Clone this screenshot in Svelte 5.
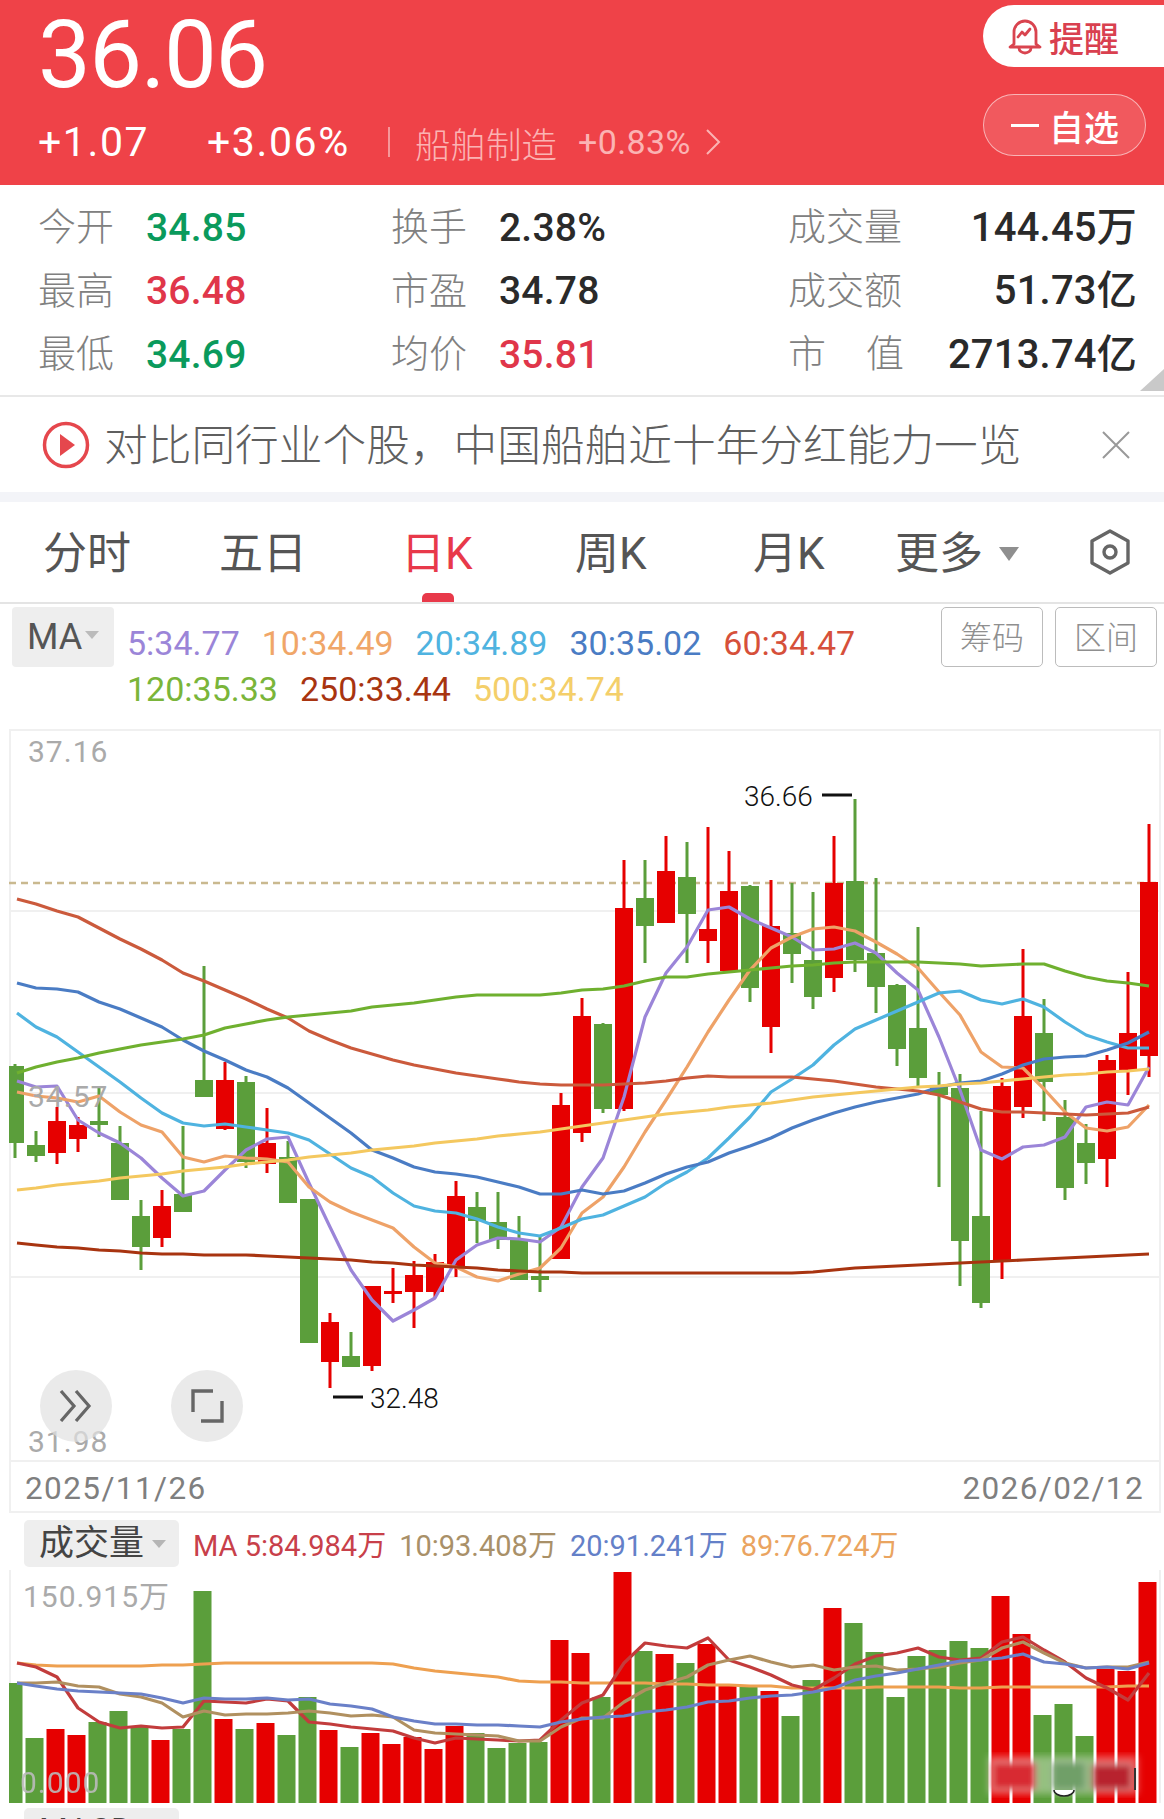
<script>
    const R = '#e60000';
    const G = '#5b9e3b';

    // [colour, high, body top, body bottom, low], page y coordinates
    const candles = [
        [G,1064,1066,1143,1158],[G,1131,1145,1156,1162],[R,1107,1121,1153,1164],[R,1117,1125,1139,1152],
        [G,1087,1121,1125,1137],[G,1126,1143,1200,1200],[G,1200,1216,1247,1270],[R,1190,1206,1238,1247],
        [G,1126,1194,1212,1212],[G,966,1080,1097,1097],[R,1062,1080,1129,1130],[G,1076,1082,1162,1168],
        [R,1108,1143,1164,1173],[G,1141,1157,1203,1203],[G,1199,1199,1343,1343],[R,1313,1322,1362,1388],
        [G,1332,1356,1367,1367],[R,1286,1286,1366,1371],[R,1268,1291,1294,1303],[R,1261,1275,1292,1328],
        [R,1254,1262,1292,1298],[R,1181,1196,1268,1277],[G,1192,1207,1221,1243],[G,1192,1222,1240,1249],
        [G,1216,1240,1280,1280],[G,1237,1276,1280,1292],[R,1093,1105,1259,1259],[R,998,1016,1133,1142],
        [G,1023,1024,1109,1113],[R,860,908,1109,1111],[G,860,898,926,963],[R,836,871,923,923],
        [G,842,877,914,963],[R,827,929,941,963],[R,851,891,971,971],[G,885,886,988,1002],
        [R,880,926,1027,1053],[G,883,933,954,983],[G,892,960,997,1009],[R,836,883,978,992],
        [G,799,881,960,972],[G,878,953,987,1013],[G,984,985,1049,1066],[G,927,1028,1078,1087],
        [G,1072,1087,1095,1187],[G,1074,1088,1241,1286],[G,1111,1216,1303,1308],[R,1078,1086,1262,1279],
        [R,949,1016,1107,1118],[G,999,1033,1082,1121],[G,1100,1117,1188,1200],[G,1124,1143,1163,1184],
        [R,1055,1060,1159,1187],[R,972,1033,1070,1095],[R,824,882,1056,1077]
    ];

    const maLines = [
        { color: '#9b85d8', ys: [1081,1087,1086,1120,1133,1143,1158,1178,1196,1191,1170,1150,1139,1137,1183,1227,1270,1300,1321,1310,1298,1260,1245,1238,1239,1242,1227,1187,1158,1097,1017,973,947,910,907,919,928,937,950,949,943,953,973,990,1037,1090,1150,1159,1147,1145,1137,1107,1102,1105,1067] },
        { color: '#eea268', ys: [1092,1096,1098,1102,1096,1112,1125,1132,1157,1162,1156,1158,1159,1162,1187,1202,1212,1220,1228,1247,1263,1267,1277,1281,1274,1268,1248,1213,1197,1167,1132,1100,1067,1032,1000,970,948,937,929,927,931,942,954,968,992,1015,1052,1067,1068,1089,1112,1128,1131,1127,1105] },
        { color: '#4fb3e0', ys: [1013,1027,1037,1052,1067,1082,1098,1113,1123,1126,1124,1127,1130,1133,1140,1154,1168,1177,1193,1206,1211,1213,1219,1227,1233,1236,1228,1219,1215,1206,1197,1183,1172,1158,1138,1117,1092,1079,1065,1045,1029,1020,1011,1002,993,991,1000,1004,999,1007,1022,1035,1042,1048,1048] },
        { color: '#4a7cc4', ys: [983,988,989,992,1002,1009,1018,1027,1040,1051,1060,1070,1077,1088,1103,1118,1133,1150,1158,1167,1172,1174,1177,1182,1187,1194,1194,1190,1194,1191,1183,1174,1167,1162,1153,1146,1138,1128,1120,1113,1107,1102,1098,1094,1087,1083,1081,1074,1065,1059,1057,1056,1050,1043,1032] },
        { color: '#cb5a3c', ys: [899,904,911,917,928,939,949,960,973,981,990,999,1009,1018,1031,1040,1048,1054,1060,1065,1069,1073,1076,1079,1082,1084,1085,1085,1085,1084,1083,1081,1078,1076,1077,1077,1077,1077,1079,1081,1084,1087,1089,1091,1095,1102,1109,1112,1112,1113,1114,1115,1114,1113,1107] },
        { color: '#6fb02f', ys: [1073,1067,1062,1058,1053,1049,1045,1042,1039,1035,1028,1024,1020,1017,1015,1013,1011,1007,1005,1003,1000,997,995,995,995,995,993,990,989,986,981,977,977,974,972,970,968,966,965,963,962,962,962,962,963,964,966,965,964,964,971,977,981,983,986] },
        { color: '#a83410', ys: [1243,1245,1247,1248,1250,1251,1253,1254,1254,1255,1255,1255,1256,1257,1258,1259,1260,1262,1263,1265,1266,1267,1268,1270,1271,1272,1272,1273,1273,1273,1273,1273,1273,1273,1273,1273,1273,1273,1272,1270,1268,1267,1266,1265,1264,1263,1262,1261,1260,1259,1258,1257,1256,1255,1254] },
        { color: '#f4c85f', ys: [1190,1188,1185,1183,1181,1178,1176,1174,1171,1169,1167,1164,1162,1160,1157,1155,1153,1150,1148,1146,1143,1141,1139,1136,1134,1132,1129,1126,1123,1120,1117,1114,1112,1110,1107,1105,1103,1100,1097,1095,1093,1091,1089,1087,1086,1084,1083,1081,1079,1077,1075,1074,1072,1071,1069] }
    ];

    const volumes = [
        [G,1683],[G,1738],[R,1729],[R,1735],[G,1722],[G,1711],[G,1727],[R,1740],[G,1729],[G,1591],[R,1719],
        [G,1729],[R,1723],[G,1735],[G,1697],[R,1730],[G,1747],[R,1733],[R,1744],[R,1737],[R,1749],[R,1726],
        [G,1733],[G,1748],[G,1743],[G,1742],[R,1640],[R,1653],[G,1697],[R,1572],[G,1651],[R,1654],[G,1663],
        [R,1644],[R,1686],[G,1687],[R,1691],[G,1716],[G,1680],[R,1608],[G,1623],[G,1652],[G,1697],[G,1656],
        [G,1650],[G,1641],[G,1648],[R,1596],[R,1634],[G,1715],[G,1704],[G,1736],[R,1669],[R,1671],[R,1582]
    ];

    const volLines = [
        { color: '#eea050', ys: [1663,1665,1666,1666,1666,1666,1666,1665,1665,1664,1663,1663,1663,1663,1663,1663,1663,1663,1664,1668,1671,1673,1675,1677,1681,1682,1682,1683,1683,1683,1683,1684,1684,1685,1685,1686,1686,1688,1688,1688,1688,1687,1687,1687,1687,1688,1688,1687,1687,1687,1687,1687,1687,1686,1686] },
        { color: '#c23c3c', ys: [1663,1667,1677,1708,1722,1728,1726,1728,1727,1701,1702,1703,1699,1701,1722,1724,1727,1729,1731,1738,1743,1738,1739,1740,1741,1740,1720,1703,1695,1663,1643,1646,1648,1638,1660,1667,1675,1685,1690,1678,1664,1656,1653,1648,1657,1660,1658,1642,1637,1650,1662,1678,1688,1700,1673] },
        { color: '#b09060', ys: [1683,1683,1682,1686,1687,1694,1697,1703,1717,1711,1715,1714,1714,1713,1711,1713,1716,1715,1717,1730,1733,1734,1735,1736,1741,1741,1727,1718,1718,1702,1690,1683,1677,1665,1660,1656,1662,1667,1665,1670,1667,1666,1670,1669,1667,1663,1660,1648,1642,1653,1663,1668,1667,1667,1662] },
        { color: '#6a80c8', ys: [1683,1686,1689,1691,1692,1693,1694,1698,1703,1698,1699,1699,1698,1700,1699,1704,1706,1709,1717,1721,1724,1724,1725,1725,1726,1727,1722,1719,1717,1716,1712,1710,1707,1702,1701,1698,1696,1695,1692,1688,1680,1676,1673,1669,1665,1661,1660,1658,1654,1662,1664,1668,1667,1669,1663] }
    ];

    const cx = (i) => 15 + 21 * i;
    const linePoints = (ys) => ys.map((y, i) => `${i === 0 ? 17 : cx(i)},${y}`).join(' ');

    const stats = [
        { label: '今开', value: '34.85', tone: 'down' },
        { label: '换手', value: '2.38%', tone: '' },
        { label: '成交量', value: '144.45万', tone: '' },
        { label: '最高', value: '36.48', tone: 'up' },
        { label: '市盈', value: '34.78', tone: '' },
        { label: '成交额', value: '51.73亿', tone: '' },
        { label: '最低', value: '34.69', tone: 'down' },
        { label: '均价', value: '35.81', tone: 'up' },
        { label: '市值', value: '2713.74亿', tone: '', spread: true }
    ];

    const tabs = ['分时', '五日', '日K', '周K', '月K'];

    const legend = [
        { color: '#9b85d8', text: '5:34.77' },
        { color: '#f0a668', text: '10:34.49' },
        { color: '#4fb3e0', text: '20:34.89' },
        { color: '#4a7cc4', text: '30:35.02' },
        { color: '#d6503a', text: '60:34.47' },
        { color: '#7ab53a', text: '120:35.33' },
        { color: '#a83410', text: '250:33.44' },
        { color: '#f4cf6a', text: '500:34.74' }
    ];

    const volLegend = [
        { color: '#c8404a', text: 'MA 5:84.984万' },
        { color: '#a99068', text: '10:93.408万' },
        { color: '#6480c8', text: '20:91.241万' },
        { color: '#eaa460', text: '89:76.724万' }
    ];
</script>

<div class="page">
    <header class="quote">
        <div class="quote-left">
            <div class="price">36.06</div>
            <div class="change">
                <span class="chg-a">+1.07</span>
                <span class="chg-b">+3.06%</span>
                <span class="sep"></span>
                <span class="sector">船舶制造</span>
                <span class="sector-pct">+0.83%</span>
                <svg class="chev" width="16" height="28" viewBox="0 0 16 28" fill="none" stroke="currentColor" stroke-width="2"><path d="M2 2l12 12L2 26" /></svg>
            </div>
        </div>
        <div class="quote-right">
            <button class="btn-alert">
                <svg width="36" height="38" viewBox="0 0 36 38" fill="none" stroke="#d9444f" stroke-width="2.8" stroke-linejoin="round" stroke-linecap="round">
                    <path d="M7 27V15a11 11 0 0 1 22 0v12l4 3H3z" />
                    <path d="M12 31a6 5 0 0 0 12 0" />
                    <path d="M11 20l4-5 3 3 5-6" />
                </svg>
                <span>提醒</span>
            </button>
            <button class="btn-watch">
                <i class="minus"></i>
                <span>自选</span>
            </button>
        </div>
    </header>

    <section class="stats">
        {#each stats as s}
            <div class="stat">
                {#if s.spread}
                    <span class="stat-label spread"><span>市</span><span>值</span></span>
                {:else}
                    <span class="stat-label">{s.label}</span>
                {/if}
                <span class="stat-value {s.tone}">{s.value}</span>
            </div>
        {/each}
        <i class="corner"></i>
    </section>

    <section class="news">
        <svg class="play" width="48" height="48" viewBox="0 0 48 48">
            <circle cx="24" cy="24" r="21.5" fill="none" stroke="#e5474d" stroke-width="3.5" />
            <path d="M18 13l15 11-15 11z" fill="#e5474d" />
        </svg>
        <span class="news-text">对比同行业个股，中国船舶近十年分红能力一览</span>
        <svg class="close" width="30" height="28" viewBox="0 0 30 28" stroke="#999" stroke-width="2" fill="none"><path d="M2 1l26 26M28 1L2 27" /></svg>
    </section>

    <nav class="tabs">
        {#each tabs as t, i}
            <span class="tab tab-{i}" class:active={i === 2}>{t}</span>
        {/each}
        <span class="tab more">更多<i class="caret"></i></span>
        <svg class="gear" width="44" height="48" viewBox="0 0 44 48" fill="none" stroke="#666" stroke-width="3.4">
            <path d="M22 3l18 10v22L22 45 4 35V13z" stroke-linejoin="round" />
            <circle cx="22" cy="24" r="6" />
        </svg>
    </nav>

    <section class="indicators">
        <div class="ma-select">MA<i class="caret small"></i></div>
        <div class="ma-legend">
            {#each legend as l}
                <span style="color: {l.color}">{l.text}</span>
            {/each}
        </div>
        <div class="chips">
            <span class="chip">筹码</span>
            <span class="chip">区间</span>
        </div>
    </section>

    <section class="kline">
        <svg class="kline-svg" width="1164" height="731" viewBox="0 729 1164 731">
            <g stroke="#f0f0f0" stroke-width="2">
                <path d="M10 729V1460M1160 729V1460M9 730H1161M9 911H1161M9 1093H1161M9 1277H1161" fill="none" />
            </g>
            <path d="M9 883H1160" stroke="#c9b98f" stroke-width="2.5" stroke-dasharray="7 5" />
            {#each candles as [color, high, top, bottom, low], i}
                <rect x={cx(i) - 1.5} y={high} width="3" height={low - high} fill={color} />
                <rect x={Math.max(cx(i) - 9, 9)} y={top} width={i === 0 ? 15 : 18} height={bottom - top} fill={color} />
            {/each}
            {#each maLines as line}
                <polyline points={linePoints(line.ys)} fill="none" stroke={line.color} stroke-width="3.2" stroke-linejoin="round" />
            {/each}
            <text class="axis" x="28" y="762">37.16</text>
            <text class="axis" x="28" y="1107">34.57</text>
            <text class="axis" x="28" y="1452">31.98</text>
            <text class="mark" x="744" y="806">36.66</text>
            <path d="M822 795H852M333 1397H363" stroke="#111" stroke-width="3" />
            <text class="mark" x="370" y="1408">32.48</text>
        </svg>
        <button class="float float-a" aria-label="展开">
            <svg width="34" height="32" viewBox="0 0 34 32" fill="none" stroke="#666" stroke-width="3.2"><path d="M2 1l13 15L2 31M17 1l13 15-13 15" /></svg>
        </button>
        <button class="float float-b" aria-label="全屏">
            <svg width="34" height="34" viewBox="0 0 34 34" fill="none" stroke="#666" stroke-width="3.4"><path d="M23 2H3v21M32 12v20H11" /></svg>
        </button>
    </section>

    <div class="dates">
        <span>2025/11/26</span>
        <span>2026/02/12</span>
    </div>

    <section class="volume">
        <div class="vol-head">
            <div class="vol-select">成交量<i class="caret tiny"></i></div>
            <div class="vol-legend">
                {#each volLegend as l}
                    <span style="color: {l.color}">{l.text}</span>
                {/each}
            </div>
        </div>
        <svg class="vol-svg" width="1164" height="233" viewBox="0 1570 1164 233">
            <defs>
                <filter id="smear"><feGaussianBlur stdDeviation="3.5" /></filter>
            </defs>
            <path d="M10 1570V1803M1160 1570V1803" stroke="#f0f0f0" stroke-width="2" />
            {#each volumes as [color, top], i}
                <rect x={Math.max(cx(i) - 10.5, 9)} y={top} width={i === 0 ? 13.5 : 18} height={1803 - top} fill={color} />
            {/each}
            {#each volLines as line}
                <polyline points={linePoints(line.ys)} fill="none" stroke={line.color} stroke-width="3.2" stroke-linejoin="round" />
            {/each}
            <text class="axis" x="23" y="1607">150.915万</text>
            <text class="axis zero" x="20" y="1793">0.000</text>
            <g filter="url(#smear)">
                <rect x="988" y="1756" width="150" height="38" fill="#fff" opacity="0.35" />
                <rect x="992" y="1762" width="44" height="28" fill="#d82a33" />
                <rect x="1052" y="1762" width="34" height="28" fill="#6f9f68" />
                <rect x="1092" y="1764" width="40" height="26" fill="#b8222e" />
            </g>
            <path d="M1135 1768V1790" stroke="#333" stroke-width="2" />
            <path d="M1054 1790a10 6 0 0 0 20 0" fill="#fff" stroke="#222" stroke-width="1.5" />
        </svg>
        <div class="next-tab">MACD</div>
    </section>
</div>

<style>
    :global(body) {
        margin: 0;
        background: #fff;
    }

    .page {
        width: 1164px;
        height: 1819px;
        overflow: hidden;
        font-family: Roboto, "Noto Sans CJK SC", sans-serif;
        background: #fff;
    }

    button {
        font-family: inherit;
        padding: 0;
        cursor: pointer;
    }

    /* quote header */
    .quote {
        height: 185px;
        background: #ef4248;
        color: #fff;
        display: flex;
        justify-content: space-between;
    }

    .quote-left {
        padding-left: 38px;
    }

    .price {
        font-size: 94px;
        line-height: 104px;
        padding-top: 3px;
        font-weight: 400;
        letter-spacing: -1.5px;
    }

    .change {
        display: flex;
        align-items: center;
        height: 40px;
        margin-top: 15px;
        font-size: 41px;
        letter-spacing: 1.6px;
    }

    .chg-a {
        width: 169px;
    }

    .chg-b {
        width: 181px;
    }

    .sep {
        width: 2px;
        height: 30px;
        background: rgba(255, 255, 255, 0.45);
        margin-right: 25px;
    }

    .sector {
        font-size: 35.5px;
        letter-spacing: 0;
        font-weight: 300;
        color: #fbb3b3;
        width: 163px;
    }

    .sector-pct {
        font-size: 34px;
        letter-spacing: 0.4px;
        color: #fbb3b3;
        width: 127px;
    }

    .chev {
        color: #fbb3b3;
    }

    .quote-right {
        display: flex;
        flex-direction: column;
        align-items: flex-end;
        padding-top: 5px;
        gap: 27px;
    }

    .btn-alert,
    .btn-watch {
        display: flex;
        align-items: center;
        font-size: 35px;
        font-weight: 500;
        height: 62px;
        box-sizing: border-box;
    }

    .btn-alert {
        width: 181px;
        border: 0;
        background: #fff;
        color: #d9404f;
        border-radius: 31px 0 0 31px;
        padding-left: 24px;
        gap: 6px;
    }

    .btn-watch {
        width: 163px;
        margin-right: 18px;
        background: rgba(255, 255, 255, 0.12);
        border: 1.5px solid rgba(255, 255, 255, 0.55);
        border-radius: 31px;
        color: #fff;
        padding-left: 27px;
        gap: 10px;
    }

    .minus {
        width: 28px;
        height: 3px;
        background: #fff;
    }

    /* stats */
    .stats {
        position: relative;
        height: 212px;
        box-sizing: border-box;
        border-bottom: 2px solid #e8e8e8;
        padding: 11px 27px 0 38px;
        display: grid;
        grid-template-columns: 353px 397px 1fr;
        grid-auto-rows: 63.5px;
    }

    .stat {
        display: flex;
        align-items: center;
    }

    .stat-label {
        width: 108px;
        font-size: 38px;
        font-weight: 300;
        color: #808080;
        margin-bottom: 8px;
    }

    .stat:nth-child(3n) {
        justify-content: space-between;
    }

    .stat:nth-child(3n) .stat-label {
        width: 116px;
    }

    .stat:nth-child(3n) .stat-value {
        font-size: 40px;
    }

    .spread {
        display: flex;
        justify-content: space-between;
    }

    .stat-value {
        font-size: 39px;
        line-height: 44px;
        font-weight: 500;
        letter-spacing: 0.2px;
        color: #2a2a2a;
    }

    .stat-value.up {
        color: #e0364a;
    }

    .stat-value.down {
        color: #0a9a5c;
    }

    .corner {
        position: absolute;
        right: 0;
        bottom: 4px;
        width: 0;
        height: 0;
        border-left: 24px solid transparent;
        border-bottom: 22px solid #c9c9c9;
    }

    /* news strip */
    .news {
        height: 95px;
        display: flex;
        align-items: center;
        padding-left: 42px;
        border-bottom: 10px solid #f3f4f8;
    }

    .news-text {
        margin: 0 0 5px 14px;
        font-size: 43.7px;
        font-weight: 300;
        color: #5f5f5f;
        white-space: nowrap;
    }

    .close {
        margin-left: 80px;
    }

    /* period tabs */
    .tabs {
        position: relative;
        height: 102px;
        box-sizing: border-box;
        border-bottom: 2px solid #e4e4e4;
        display: flex;
        align-items: center;
        padding: 0 32px 0 43px;
        font-size: 44px;
        color: #555;
    }

    .tab {
        font-weight: 400;
        line-height: 60px;
        margin-top: 4px;
    }

    .tab-0 {
        width: 176px;
    }

    .tab-1 {
        width: 182px;
    }

    .tab-2 {
        width: 174px;
    }

    .tab-3 {
        width: 178px;
    }

    .tab-4 {
        width: 142px;
    }

    .tab.active {
        color: #e8394a;
    }

    .tab.active::after {
        content: '';
        position: absolute;
        left: 422px;
        bottom: 0;
        width: 32px;
        height: 9px;
        background: #e8394a;
        border-radius: 5px 5px 0 0;
    }

    .more {
        display: flex;
        align-items: center;
    }

    .caret {
        width: 0;
        height: 0;
        margin-left: 16px;
        border-left: 10px solid transparent;
        border-right: 10px solid transparent;
        border-top: 14px solid #8f8f8f;
    }

    .caret.small {
        margin-left: 3px;
        margin-top: -4px;
        border-left-width: 7px;
        border-right-width: 7px;
        border-top: 8px solid #bbb;
    }

    .caret.tiny {
        margin-left: 8px;
        border-left-width: 7px;
        border-right-width: 7px;
        border-top: 8px solid #b5b5b5;
    }

    .gear {
        margin-left: auto;
    }

    /* indicator row */
    .indicators {
        height: 125px;
        box-sizing: border-box;
        padding: 3px 7px 0 12px;
        display: flex;
        align-items: flex-start;
    }

    .ma-select {
        width: 102px;
        height: 60px;
        background: #eee;
        border-radius: 4px;
        display: flex;
        align-items: center;
        padding-left: 15px;
        box-sizing: border-box;
        font-size: 36px;
        color: #555;
    }

    .ma-legend {
        width: 760px;
        margin: 16px 0 0 13px;
        display: flex;
        flex-wrap: wrap;
        column-gap: 22px;
        row-gap: 6px;
        font-size: 34px;
        line-height: 40px;
    }

    .chips {
        margin-left: auto;
        display: flex;
        gap: 12px;
    }

    .chip {
        width: 102px;
        height: 60px;
        box-sizing: border-box;
        border: 1.5px solid #bcbcbc;
        border-radius: 5px;
        padding-bottom: 4px;
        display: flex;
        align-items: center;
        justify-content: center;
        font-size: 32px;
        font-weight: 300;
        color: #8f8f8f;
    }

    /* candles */
    .kline {
        position: relative;
        height: 731px;
    }

    .kline-svg,
    .vol-svg {
        display: block;
    }

    .axis {
        font-size: 30px;
        letter-spacing: 1px;
        fill: #aaa;
    }

    .zero {
        fill: #bbb;
        opacity: 0.9;
    }

    .mark {
        font-size: 28px;
        font-weight: 300;
        fill: #111;
    }

    .float {
        position: absolute;
        top: 641px;
        width: 72px;
        height: 72px;
        border: 0;
        border-radius: 50%;
        background: rgba(225, 225, 225, 0.7);
        display: flex;
        align-items: center;
        justify-content: center;
    }

    .float-a {
        left: 40px;
    }

    .float-b {
        left: 171px;
    }

    .dates {
        height: 53px;
        box-sizing: border-box;
        margin: 0 3px 0 9px;
        padding: 4px 15px 0 14px;
        border: 2px solid #f0f0f0;
        display: flex;
        align-items: center;
        justify-content: space-between;
        font-size: 31.5px;
        letter-spacing: 1.4px;
        color: #7f7f7f;
    }

    /* volume pane */
    .volume {
        position: relative;
    }

    .vol-head {
        height: 57px;
        box-sizing: border-box;
        padding: 7px 0 0 24px;
        display: flex;
        align-items: flex-start;
    }

    .vol-select {
        width: 155px;
        height: 47px;
        background: #eee;
        border-radius: 5px;
        padding-left: 15px;
        box-sizing: border-box;
        display: flex;
        align-items: center;
        font-size: 35px;
        line-height: 43px;
        color: #444;
    }

    .vol-legend {
        margin: 8px 0 0 14px;
        display: flex;
        gap: 13px;
        font-size: 29px;
        line-height: 36px;
    }

    .next-tab {
        position: absolute;
        left: 24px;
        top: 295px;
        width: 155px;
        height: 47px;
        background: #eee;
        border-radius: 5px;
        padding-left: 15px;
        box-sizing: border-box;
        font-size: 33px;
        line-height: 46px;
        color: #444;
    }
</style>
